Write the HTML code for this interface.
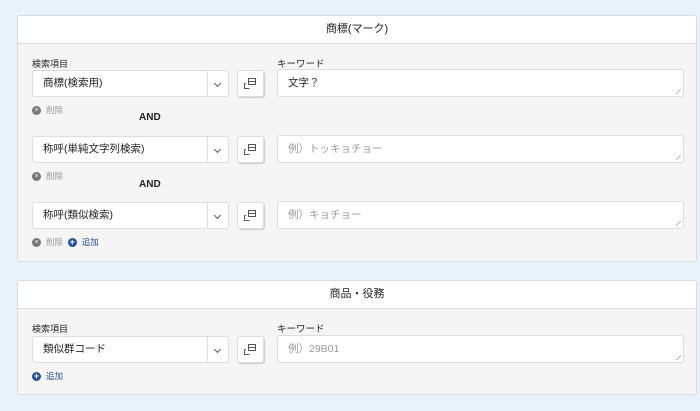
<html><head><style>
body{margin:0;background:#e8f2fb;font-family:"Liberation Sans","Noto Sans CJK JP",sans-serif;width:700px;height:411px;position:relative;overflow:hidden;color:#222}
.p{position:absolute;left:17px;width:680px;background:#f5f5f5;border:1px solid #dcdcdc;border-radius:3px;box-sizing:border-box}
.h{background:#fff;border-bottom:1px solid #dcdcdc;height:27px;line-height:27px;text-align:center;font-size:11px}
.a{position:absolute}
.lbl{font-size:9px;color:#222}
.sel{position:absolute;left:14px;width:197px;height:27px;background:#fff;border:1px solid #ddd;border-radius:3px;box-sizing:border-box;font-size:10.5px;line-height:25px;padding-left:10px}
.sel:after{content:"";position:absolute;left:174px;top:0;bottom:0;border-left:1px solid #ddd}
.chev{position:absolute;right:8px;top:10px;width:4px;height:4px;border-right:1px solid #555;border-bottom:1px solid #555;transform:rotate(45deg)}
.btn{position:absolute;left:219px;width:27px;height:27px;background:#fff;border:1px solid #ddd;border-radius:3px;box-sizing:border-box;box-shadow:1px 1px 1px #ccc}
.ta{position:absolute;left:259px;width:407px;height:28px;background:#fff;border:1px solid #ddd;border-radius:3px;box-sizing:border-box;font-size:10.5px;line-height:26px;padding-left:10px}
.ta:after{content:"";position:absolute;right:2px;bottom:2px;width:5px;height:5px;background:linear-gradient(135deg,transparent 45%,#999 45%,#999 55%,transparent 55%)}
.ph{color:#999}
.del{position:absolute;left:14px;font-size:8.5px;color:#999;line-height:10px}
.x{display:inline-block;width:9px;height:9px;border-radius:50%;background:#777;color:#fff;font-size:7px;text-align:center;line-height:9px;vertical-align:middle;margin-right:5px}
.plus{display:inline-block;width:9px;height:9px;border-radius:50%;background:#1f4e9c;color:#fff;font-size:9px;font-weight:bold;text-align:center;line-height:9px;vertical-align:middle;margin-right:5px}
.add{color:#1f4e9c}
.and{position:absolute;left:121px;font-size:10px;font-weight:bold}
</style></head><body>
<div class="p" style="top:15px;height:247px">
<div class="h">商標(マーク)</div>
<div class="a lbl" style="left:14px;top:41px">検索項目</div>
<div class="a lbl" style="left:259px;top:40px;font-size:9.5px">キーワード</div>
<div class="sel" style="top:54px">商標(検索用)<span class="chev"></span></div>
<div class="btn" style="top:54px"><svg width="25" height="25" viewBox="0 0 25 25" fill="none" stroke="#555"><rect x="10.5" y="7.5" width="7" height="6"/><path d="M10.5 10.5H17.5M6.5 12.5V17.5H11.5M6.5 12.5H8"/></svg></div>
<div class="ta" style="top:53px">文字？</div>
<div class="del" style="top:89px"><span class="x">×</span>削除</div>
<div class="and" style="top:96px">AND</div>
<div class="sel" style="top:120px">称呼(単純文字列検索)<span class="chev"></span></div>
<div class="btn" style="top:120px"><svg width="25" height="25" viewBox="0 0 25 25" fill="none" stroke="#555"><rect x="10.5" y="7.5" width="7" height="6"/><path d="M10.5 10.5H17.5M6.5 12.5V17.5H11.5M6.5 12.5H8"/></svg></div>
<div class="ta ph" style="top:119px">例）トッキョチョー</div>
<div class="del" style="top:155px"><span class="x">×</span>削除</div>
<div class="and" style="top:163px">AND</div>
<div class="sel" style="top:186px">称呼(類似検索)<span class="chev"></span></div>
<div class="btn" style="top:186px"><svg width="25" height="25" viewBox="0 0 25 25" fill="none" stroke="#555"><rect x="10.5" y="7.5" width="7" height="6"/><path d="M10.5 10.5H17.5M6.5 12.5V17.5H11.5M6.5 12.5H8"/></svg></div>
<div class="ta ph" style="top:185px">例）キョチョー</div>
<div class="del" style="top:221px"><span class="x">×</span>削除 &nbsp;<span class="plus">+</span><span class="add">追加</span></div>
</div>
<div class="p" style="top:280px;height:115px">
<div class="h">商品・役務</div>
<div class="a lbl" style="left:14px;top:41px">検索項目</div>
<div class="a lbl" style="left:259px;top:40px;font-size:9.5px">キーワード</div>
<div class="sel" style="top:55px">類似群コード<span class="chev"></span></div>
<div class="btn" style="top:55px"><svg width="25" height="25" viewBox="0 0 25 25" fill="none" stroke="#555"><rect x="10.5" y="7.5" width="7" height="6"/><path d="M10.5 10.5H17.5M6.5 12.5V17.5H11.5M6.5 12.5H8"/></svg></div>
<div class="ta ph" style="top:54px">例）29B01</div>
<div class="del" style="top:90px"><span class="plus">+</span><span class="add">追加</span></div>
</div>
</body></html>
